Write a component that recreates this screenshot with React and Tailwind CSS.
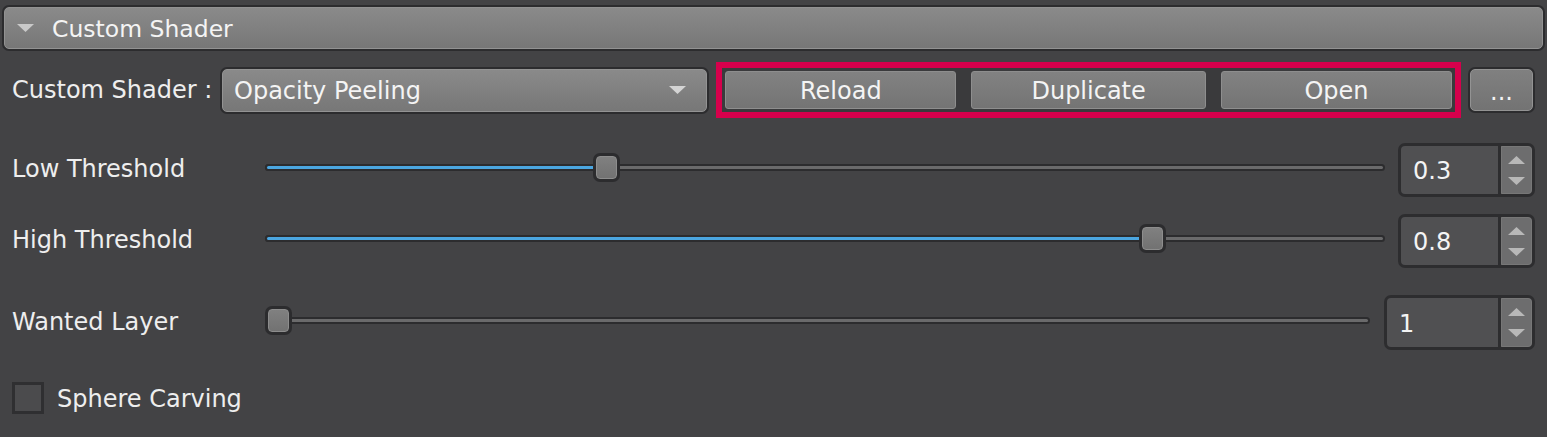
import React from "react";

/* small drawn triangles */
function Tri({ dir = "down", className = "" }) {
  return (
    <svg width="17" height="8" viewBox="0 0 17 8" className={className}>
      {dir === "down" ? (
        <polygon points="0,0 17,0 8.5,8" fill="currentColor" />
      ) : (
        <polygon points="0,8 17,8 8.5,0" fill="currentColor" />
      )}
    </svg>
  );
}

function GrayButton({ children, className = "" }) {
  return (
    <div
      className={`flex items-center justify-center rounded-[3px] border border-[#8e8e8e] bg-gradient-to-b from-[#828282] to-[#747474] pt-[1px] text-[#f4f4f4] ${className}`}
    >
      {children}
    </div>
  );
}

function Slider({ value }) {
  return (
    <div className="relative h-[29px] flex-1 mb-[5px]">
      <div className="absolute left-0 right-0 top-[11px] h-[7px] rounded-full bg-[#2c2c2e] p-[2px]">
        <div className="h-full rounded-full bg-[#6a6a6b]" />
      </div>
      <div
        className="absolute left-0 top-[11px] h-[7px] rounded-full bg-[#2c2c2e] p-[2px]"
        style={{ width: `calc(13px + (100% - 27px) * ${value})` }}
      >
        <div className="h-full rounded-full bg-[#4ba6e0]" />
      </div>
      <div
        className="absolute top-0 h-[29px] w-[27px] rounded-[7px] bg-[#2c2c2e] p-[3px]"
        style={{ left: `calc((100% - 27px) * ${value})` }}
      >
        <div className="h-full w-full rounded-[4px] border border-[#8d8d8d] bg-gradient-to-b from-[#808080] to-[#727272]" />
      </div>
    </div>
  );
}

function SpinBox({ value, className = "" }) {
  return (
    <div
      className={`flex h-full rounded-[7px] border-[3px] border-[#2d2d2f] bg-[#505052] ${className}`}
    >
      <div className="flex flex-1 items-center pl-[12px] pt-[2px] text-[24px] text-[#f4f4f4]">{value}</div>
      <div className="w-[3px] bg-[#2d2d2f]" />
      <div className="flex w-[31px] flex-col items-center justify-center gap-[13px] rounded-r-[4px] border border-[#777] bg-[#6d6d6e] text-[#b8b8b8]">
        <Tri dir="up" />
        <Tri dir="down" />
      </div>
    </div>
  );
}

function SliderRow({ label, value, shown, spinW, gap, height, mt }) {
  return (
    <div className={`flex items-center pl-[12px] pr-[12px] ${height} ${mt}`}>
      <div className="w-[253px] shrink-0 mb-[2px]">{label}</div>
      <Slider value={value} />
      <SpinBox value={shown} className={`${spinW} ${gap}`} />
    </div>
  );
}

export default function App() {
  return (
    <div
      className="w-[1547px] h-[437px] overflow-hidden bg-[#434345] text-[24px] leading-none text-[#eeeeee]"
      style={{ fontFamily: '"DejaVu Sans", "Liberation Sans", sans-serif' }}
    >
      {/* HEADER */}
      <div className="mx-[2px] mt-[5px] h-[46px] rounded-[7px] border-2 border-[#2c2c2e] bg-[#2c2c2e]">
        <div className="flex h-full items-center rounded-[5px] border border-[#929292] bg-gradient-to-b from-[#8a8a8a] to-[#777777] pl-[12px]">
          <Tri className="text-[#c9c9c9]" />
          <span className="ml-[18px] pt-[3px] text-[23.5px] text-[#f4f4f4]">Custom Shader</span>
        </div>
      </div>

      {/* SHADER ROW */}
      <div className="mt-[11px] flex h-[56px] items-center pl-[12px] pr-[12px]">
        <div className="w-[208px] shrink-0">Custom Shader :</div>
        <div className="h-[47px] w-[490px] rounded-[7px] bg-[#2c2c2e] p-[2px]">
          <div className="flex h-full items-center rounded-[5px] border border-[#939393] bg-gradient-to-b from-[#8a8a8a] to-[#777777] pl-[11px] pr-[20px] text-[#f4f4f4]">
            <span className="flex-1 pt-[1px]">Opacity Peeling</span>
            <Tri className="text-[#d4d4d4]" />
          </div>
        </div>
        <div className="ml-[7px] flex h-[56px] w-[745px] gap-[14px] border-[6px] border-[#d6004c] bg-[#3a3a3c] p-[3px]">
          <GrayButton className="w-[232px]">Reload</GrayButton>
          <GrayButton className="w-[235px] ml-[1px]">Duplicate</GrayButton>
          <GrayButton className="w-[232px] ml-[1px]">Open</GrayButton>
        </div>
        <div className="ml-[7px] h-[46px] w-[67px] rounded-[7px] bg-[#2c2c2e] p-[2px]">
          <div className="flex h-full items-center justify-center rounded-[5px] border border-[#939393] bg-gradient-to-b from-[#808080] to-[#737373] pt-[4px] text-[#f4f4f4]">
            ...
          </div>
        </div>
      </div>

      {/* SLIDERS */}
      <SliderRow label="Low Threshold" value={0.3} shown="0.3" spinW="w-[137px]" gap="ml-[13px]" height="h-[54px]" mt="mt-[25px]" />
      <SliderRow label="High Threshold" value={0.8} shown="0.8" spinW="w-[137px]" gap="ml-[13px]" height="h-[54px]" mt="mt-[17px]" />
      <SliderRow label="Wanted Layer" value={0} shown="1" spinW="w-[151px]" gap="ml-[14px]" height="h-[55px]" mt="mt-[27px]" />

      {/* CHECKBOX */}
      <div className="mt-[32px] flex items-center pl-[12px]">
        <div className="h-[32px] w-[32px] border-[3px] border-[#2f2f31] bg-[#4b4b4d]" />
        <span className="ml-[13px] pt-[2px]">Sphere Carving</span>
      </div>
    </div>
  );
}
